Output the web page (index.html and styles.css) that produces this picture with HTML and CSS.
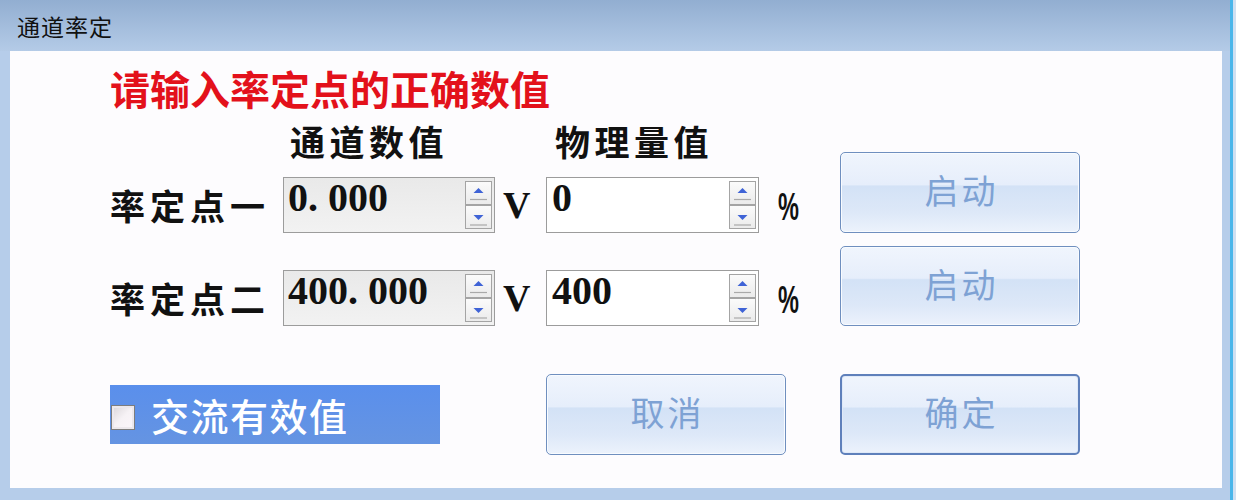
FILE: index.html
```html
<!DOCTYPE html>
<html lang="zh-CN">
<head>
<meta charset="utf-8">
<title>通道率定</title>
<link rel="stylesheet" href="styles.css">
</head>
<body>
<div class="window">
  <div class="titlebar">通道率定</div>
  <div class="frame">
    <div class="panel">
      <h1 class="prompt">请输入率定点的正确数值</h1>
      <div class="form">
        <div class="colhead ch1">通道数值</div>
        <div class="colhead ch2">物理量值</div>
        <button class="btn b-start1">启动</button>

        <div class="label r1">率定点一</div>
        <div class="spin disabled s1 r1"><span class="val">0<span class="dot">.</span>000</span>
          <div class="arrows">
            <span class="arr"><svg width="25" height="22" viewBox="0 0 25 22"><path d="M7.5 11 L12.5 6 L17.5 11 Z" fill="#3f63d6"/><path d="M4 17.5 H21" stroke="#a9a9a9" stroke-width="1.2"/></svg></span>
            <span class="arr"><svg width="25" height="22" viewBox="0 0 25 22"><path d="M7.5 9 L12.5 14 L17.5 9 Z" fill="#3f63d6"/><path d="M4 19 H21" stroke="#a9a9a9" stroke-width="1.2"/></svg></span>
          </div>
        </div>
        <div class="unit uv r1">V</div>
        <div class="spin s2 r1"><span class="val">0</span>
          <div class="arrows">
            <span class="arr"><svg width="25" height="22" viewBox="0 0 25 22"><path d="M7.5 11 L12.5 6 L17.5 11 Z" fill="#3f63d6"/><path d="M4 17.5 H21" stroke="#a9a9a9" stroke-width="1.2"/></svg></span>
            <span class="arr"><svg width="25" height="22" viewBox="0 0 25 22"><path d="M7.5 9 L12.5 14 L17.5 9 Z" fill="#3f63d6"/><path d="M4 19 H21" stroke="#a9a9a9" stroke-width="1.2"/></svg></span>
          </div>
        </div>
        <div class="unit up r1"><span class="pct">%</span></div>

        <button class="btn b-start2">启动</button>
        <div class="label r2">率定点二</div>
        <div class="spin disabled s1 r2"><span class="val">400<span class="dot">.</span>000</span>
          <div class="arrows">
            <span class="arr"><svg width="25" height="22" viewBox="0 0 25 22"><path d="M7.5 11 L12.5 6 L17.5 11 Z" fill="#3f63d6"/><path d="M4 17.5 H21" stroke="#a9a9a9" stroke-width="1.2"/></svg></span>
            <span class="arr"><svg width="25" height="22" viewBox="0 0 25 22"><path d="M7.5 9 L12.5 14 L17.5 9 Z" fill="#3f63d6"/><path d="M4 19 H21" stroke="#a9a9a9" stroke-width="1.2"/></svg></span>
          </div>
        </div>
        <div class="unit uv r2">V</div>
        <div class="spin s2 r2"><span class="val">400</span>
          <div class="arrows">
            <span class="arr"><svg width="25" height="22" viewBox="0 0 25 22"><path d="M7.5 11 L12.5 6 L17.5 11 Z" fill="#3f63d6"/><path d="M4 17.5 H21" stroke="#a9a9a9" stroke-width="1.2"/></svg></span>
            <span class="arr"><svg width="25" height="22" viewBox="0 0 25 22"><path d="M7.5 9 L12.5 14 L17.5 9 Z" fill="#3f63d6"/><path d="M4 19 H21" stroke="#a9a9a9" stroke-width="1.2"/></svg></span>
          </div>
        </div>
        <div class="unit up r2"><span class="pct">%</span></div>

        <label class="check"><span class="box"></span><span class="check-text">交流有效值</span></label>
        <button class="btn b-cancel">取消</button>
        <button class="btn b-ok">确定</button>
      </div>
    </div>
  </div>
</div>
</body>
</html>
```
FILE: styles.css
```css
* { box-sizing: border-box; }
html, body { margin: 0; padding: 0; }
body {
  width: 1236px;
  height: 500px;
  overflow: hidden;
  background: #cfe0f2;
  font-family: "Noto Sans CJK SC", "Noto Sans", sans-serif;
}
.window {
  width: 1233px;
  height: 500px;
  border-right: 3px solid #4ab6ea;
  background: #b6cdea;
  display: flex;
  flex-direction: column;
}
.titlebar {
  height: 51px;
  flex: none;
  background: linear-gradient(#92aed1, #b4cbe7);
  padding-left: 17px;
  padding-top: 11px;
  font-size: 23px;
  line-height: 30px;
  letter-spacing: 1px;
  color: #111;
}
.frame {
  flex: 1;
  padding: 0 8px 12px 10px;
  background: #b6cdea;
}
.panel {
  height: 437px;
  background: #fdfcfe;
  padding-left: 100px;
  padding-top: 17px;
}
.prompt {
  margin: 0;
  font-size: 40px;
  line-height: 40px;
  font-weight: 700;
  color: #e3111b;
  margin-bottom: 15px;
}
.form {
  display: grid;
  grid-template-columns: 173px 212px 51px 213px 81px 240px;
  grid-template-rows: 54px 56px 13px 24px 56px 48px 81px;
}
.colhead {
  grid-row: 1;
  font-size: 35px;
  line-height: 35px;
  font-weight: 700;
  letter-spacing: 4.5px;
  color: #111;
}
.ch1 { grid-column: 2; padding-left: 7px; }
.ch2 { grid-column: 4; padding-left: 9px; }
.r1 { grid-row: 2; }
.r2 { grid-row: 5; }
.label {
  grid-column: 1;
  align-self: center;
  font-size: 35px;
  line-height: 40px;
  font-weight: 600;
  letter-spacing: 5px;
  color: #111;
}
.spin {
  display: flex;
  align-items: center;
  border: 1px solid #9c9c9c;
  background: #fff;
  padding-left: 4px;
  padding-right: 2px;
}
.spin.disabled { background: linear-gradient(#e9e9e9, #f2f2f2); }
.s1 { grid-column: 2; }
.s2 { grid-column: 4; padding-left: 5px; }
.val {
  flex: 1;
  align-self: flex-start;
  font-family: "Liberation Serif", "DejaVu Serif", serif;
  font-size: 40px;
  line-height: 40px;
  font-weight: 700;
  color: #111;
}
.dot { margin-right: 10px; }
.arrows {
  display: flex;
  flex-direction: column;
  width: 27px;
  height: 48px;
}
.arr {
  display: block;
  height: 24px;
  border: 1px solid #a4a4a4;
  background: linear-gradient(#fbfbfb, #ebebeb);
}
.arr svg { display: block; }
.unit {
  align-self: center;
  color: #111;
}
.uv {
  grid-column: 3;
  padding-left: 8px;
  font-family: "Liberation Serif", "DejaVu Serif", serif;
  font-size: 38px;
  line-height: 40px;
  font-weight: 700;
}
.up {
  grid-column: 5;
  padding-left: 19px;
  font-family: "Liberation Sans", sans-serif;
  font-weight: 700;
  font-size: 38px;
  line-height: 40px;
  padding-top: 4px;
}
.pct {
  display: inline-block;
  transform: scaleX(0.62);
  transform-origin: left center;
}
.btn {
  margin: 0;
  width: 240px;
  height: 81px;
  border: 1px solid #6f8fbf;
  border-radius: 5px;
  background: linear-gradient(#f0f5fd 0%, #e6eefb 40%, #d3e2f6 42%, #dde8f8 75%, #ecf2fc 100%);
  box-shadow: inset 0 0 0 1px #f8fbff;
  font-family: "Noto Sans CJK SC", sans-serif;
  font-size: 34px;
  letter-spacing: 3px;
  color: #7ea2d4;
  padding: 0 0 6px 3px;
}
.b-start1 { grid-column: 6; grid-row: 1 / 3; align-self: end; }
.b-start2 { grid-column: 6; grid-row: 4 / 6; height: 80px; }
.b-cancel { grid-column: 4 / 6; grid-row: 7; }
.b-ok {
  grid-column: 6;
  grid-row: 7;
  border: 2px solid #5f80bb;
  box-shadow: inset 0 0 0 1px #dfe9f8;
}
.check {
  grid-column: 1 / 4;
  grid-row: 7;
  justify-self: start;
  align-self: center;
  width: 330px;
  height: 59px;
  background: linear-gradient(#5a8fec, #6594e2);
  display: flex;
  align-items: center;
  padding-left: 1px;
}
.box {
  width: 24px;
  height: 25px;
  border: 1px solid #7d7d7d;
  background: linear-gradient(135deg, #d8d4d8, #f6f2f5 50%, #fbf6fa);
  box-shadow: inset 0 0 0 2px #ece8ec;
  margin-top: 5px;
}
.check-text {
  margin-left: 16px;
  font-size: 38px;
  line-height: 44px;
  letter-spacing: 1.5px;
  color: #fff;
  font-weight: 500;
}
```
